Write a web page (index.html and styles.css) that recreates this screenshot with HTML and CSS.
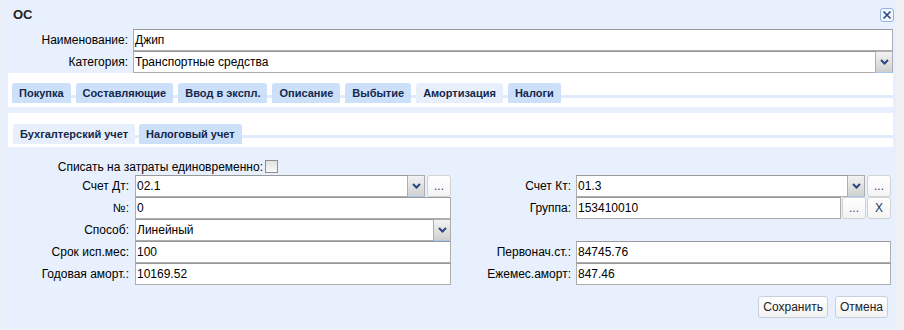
FILE: index.html
```html
<!DOCTYPE html>
<html lang="ru">
<head>
  <meta charset="UTF-8">
  <title>ОС</title>
  <link rel="stylesheet" href="styles.css">
</head>
<body>

  <div class="dialog">
    <div class="titlebar">
      <span class="title">ОС</span>
      <span class="close">
        <svg width="12" height="12" viewBox="0 0 12 12">
          <path d="M2.5 2.5 L9.5 9.5 M9.5 2.5 L2.5 9.5" stroke="#2b4784" stroke-width="1.6" fill="none"/>
        </svg>
      </span>
    </div>

    <div class="row">
      <span class="lbl">Наименование:</span>
      <div class="field">Джип</div>
    </div>
    <div class="row">
      <span class="lbl">Категория:</span>
      <div class="combo">
        <div class="field">Транспортные средства</div>
        <span class="trigger"><svg width="9" height="6" viewBox="0 0 9 6"><path d="M1 1 L4.5 4.5 L8 1" stroke="#2b4581" stroke-width="2" fill="none"/></svg></span>
      </div>
    </div>

    <div class="tabpanel">
      <div class="strip">
        <span class="tab">Покупка</span>
        <span class="tab">Составляющие</span>
        <span class="tab">Ввод в экспл.</span>
        <span class="tab">Описание</span>
        <span class="tab">Выбытие</span>
        <span class="tab active">Амортизация</span>
        <span class="tab">Налоги</span>
      </div>
    </div>

    <div class="tabpanel sub">
      <div class="strip">
        <span class="tab active">Бухгалтерский учет</span>
        <span class="tab">Налоговый учет</span>
      </div>
    </div>

    <div class="onetime">
      <span class="lbl">Списать на затраты единовременно:</span>
      <span class="check"></span>
    </div>

    <div class="grid">
      <span class="lbl">Счет Дт:</span>
      <div class="cell">
        <div class="combo">
          <div class="field">02.1</div>
          <span class="trigger"><svg width="9" height="6" viewBox="0 0 9 6"><path d="M1 1 L4.5 4.5 L8 1" stroke="#2b4581" stroke-width="2" fill="none"/></svg></span>
        </div>
        <span class="btn">...</span>
      </div>
      <span class="lbl r">Счет Кт:</span>
      <div class="cell">
        <div class="combo">
          <div class="field">01.3</div>
          <span class="trigger"><svg width="9" height="6" viewBox="0 0 9 6"><path d="M1 1 L4.5 4.5 L8 1" stroke="#2b4581" stroke-width="2" fill="none"/></svg></span>
        </div>
        <span class="btn">...</span>
      </div>

      <span class="lbl">№:</span>
      <div class="cell"><div class="field">0</div></div>
      <span class="lbl r">Группа:</span>
      <div class="cell tight">
        <div class="field">153410010</div>
        <span class="btn">...</span>
        <span class="btn x">X</span>
      </div>

      <span class="lbl">Способ:</span>
      <div class="cell">
        <div class="combo">
          <div class="field">Линейный</div>
          <span class="trigger"><svg width="9" height="6" viewBox="0 0 9 6"><path d="M1 1 L4.5 4.5 L8 1" stroke="#2b4581" stroke-width="2" fill="none"/></svg></span>
        </div>
      </div>
      <span class="lbl r"></span>
      <div class="cell"></div>

      <span class="lbl">Срок исп.мес:</span>
      <div class="cell"><div class="field">100</div></div>
      <span class="lbl r">Первонач.ст.:</span>
      <div class="cell"><div class="field">84745.76</div></div>

      <span class="lbl">Годовая аморт.:</span>
      <div class="cell"><div class="field">10169.52</div></div>
      <span class="lbl r">Ежемес.аморт:</span>
      <div class="cell"><div class="field">847.46</div></div>
    </div>

    <div class="footer">
      <span class="fbtn">Сохранить</span>
      <span class="fbtn">Отмена</span>
    </div>
  </div>

</body>
</html>
```

FILE: styles.css
```css
body {
  margin: 0;
  background: #eef1f5;
  font-family: 'Liberation Sans', Arial, sans-serif;
  font-size: 12px;
  color: #000;
}

.dialog {
  margin-left: 1px;
  width: 895px;
  height: 328px;
  background: #e7f0fc;
  border-radius: 0 5px 5px 5px;
  overflow: hidden;
}

.titlebar {
  display: flex;
  justify-content: space-between;
  align-items: center;
  height: 29px;
  padding: 0 2px 0 12px;
  box-sizing: border-box;
}

.title {
  font-weight: bold;
  font-size: 13px;
  color: #222;
}

.close {
  width: 14px;
  height: 14px;
  box-sizing: border-box;
  border: 1px solid #93b3e3;
  border-radius: 3px;
  background: #f2f7fe;
  display: flex;
  align-items: center;
  justify-content: center;
}

.row {
  display: flex;
  height: 22px;
  margin-right: 3px;
}

.row .lbl {
  width: 132px;
  padding-right: 5px;
  box-sizing: border-box;
  text-align: right;
  line-height: 22px;
}

.field {
  flex: 1;
  min-width: 0;
  height: 22px;
  box-sizing: border-box;
  border: 1px solid #adadad;
  border-top-color: #999;
  background: #fff;
  padding: 0 1px;
  line-height: 20px;
  white-space: nowrap;
  overflow: hidden;
}

.combo {
  flex: 1;
  display: flex;
  min-width: 0;
}

.trigger {
  width: 17px;
  height: 22px;
  flex: none;
  box-sizing: border-box;
  border: 1px solid #adadad;
  border-left: none;
  border-bottom-color: #a9c6ee;
  background: linear-gradient(#f3f3f3, #d0d0d0);
  display: flex;
  align-items: center;
  justify-content: center;
}

.tabpanel {
  margin: 0 3px 0 7px;
  height: 34px;
  box-sizing: border-box;
  padding: 10px 0 0 4px;
  background: #fff;
}

.tabpanel.sub {
  margin-top: 6px;
  padding: 11px 0 0 5px;
}

.strip {
  display: flex;
  gap: 5px;
  height: 20px;
  background: linear-gradient(to bottom, transparent 12px, #e1ebfb 12px, #e1ebfb 15px, transparent 15px);
}

.sub .strip {
  gap: 4px;
  background: linear-gradient(to bottom, transparent 11px, #e1ebfb 11px, #e1ebfb 14px, transparent 14px);
}

.tab {
  height: 20px;
  line-height: 20px;
  padding: 0 7px;
  background: #cde0f9;
  border-radius: 3px 3px 0 0;
  font-size: 11px;
  font-weight: bold;
  color: #15284b;
}

.tab.active {
  background: #e6effb;
}

.onetime {
  display: flex;
  align-items: center;
  height: 13px;
  margin-top: 13px;
}

.onetime .lbl {
  width: 262px;
  text-align: right;
}

.check {
  width: 13px;
  height: 13px;
  margin-left: 2px;
  box-sizing: border-box;
  border: 1px solid #8e8e8e;
  background: linear-gradient(#e2e2e2, #f8f8f8);
}

.grid {
  display: grid;
  grid-template-columns: 134px 316px 125px 315px;
  grid-auto-rows: 22px;
  margin-top: 2px;
}

.grid .lbl {
  text-align: right;
  padding-right: 6px;
  line-height: 22px;
  white-space: nowrap;
}

.grid .lbl.r {
  padding-right: 5px;
}

.cell {
  display: flex;
  gap: 2px;
}

.cell.tight {
  gap: 1px;
}

.btn {
  width: 24px;
  height: 22px;
  flex: none;
  box-sizing: border-box;
  border: 1px solid #d2d2d2;
  border-radius: 3px;
  background: linear-gradient(#fff, #f4f4f4);
  text-align: center;
  line-height: 20px;
  color: #3a3a72;
}

.btn.x {
  line-height: 21px;
  color: #22385f;
}

.footer {
  display: flex;
  justify-content: flex-end;
  gap: 7px;
  margin-top: 11px;
  padding-right: 8px;
}

.fbtn {
  height: 22px;
  box-sizing: border-box;
  padding: 0 4px;
  border: 1px solid #c8d0dc;
  border-radius: 3px;
  background: linear-gradient(#fff, #f2f2f2);
  line-height: 20px;
  color: #222;
}
```
